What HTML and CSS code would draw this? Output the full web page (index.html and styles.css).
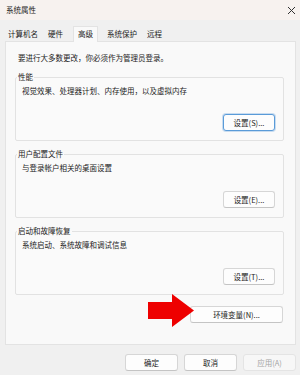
FILE: index.html
```html
<!DOCTYPE html>
<html lang="zh-CN">
<head>
<meta charset="utf-8">
<title>系统属性</title>
<link rel="stylesheet" href="styles.css">
</head>
<body>
<div class="window">
  <div class="titlebar">
    <span class="title">系统属性</span>
    <svg class="close" width="9" height="9" viewBox="0 0 9 9"><path d="M1 1 L8 8 M8 1 L1 8" stroke="#333" stroke-width="1" fill="none"/></svg>
  </div>
  <div class="tabs">
    <span class="tab">计算机名</span>
    <span class="tab">硬件</span>
    <span class="tab active">高级</span>
    <span class="tab">系统保护</span>
    <span class="tab">远程</span>
  </div>
  <div class="panel">
    <p class="intro">要进行大多数更改，你必须作为管理员登录。</p>
    <fieldset class="group">
      <legend>性能</legend>
      <div class="group-body">
        <p class="desc">视觉效果、处理器计划、内存使用，以及虚拟内存</p>
        <div class="btn-row"><button class="btn focused">设置(S)...</button></div>
      </div>
    </fieldset>
    <fieldset class="group">
      <legend>用户配置文件</legend>
      <div class="group-body">
        <p class="desc">与登录帐户相关的桌面设置</p>
        <div class="btn-row"><button class="btn">设置(E)...</button></div>
      </div>
    </fieldset>
    <fieldset class="group">
      <legend>启动和故障恢复</legend>
      <div class="group-body">
        <p class="desc">系统启动、系统故障和调试信息</p>
        <div class="btn-row"><button class="btn">设置(T)...</button></div>
      </div>
    </fieldset>
    <div class="env-row">
      <div class="env-wrap">
        <svg class="arrow" width="46" height="33" viewBox="0 0 46 33"><polygon points="0,8 24,8 24,0 46,16.5 24,33 24,25 0,25" fill="#ee0000"/></svg>
        <button class="btn env">环境变量(N)...</button>
      </div>
    </div>
  </div>
  <div class="footer">
    <button class="btn foot">确定</button>
    <button class="btn foot">取消</button>
    <button class="btn foot disabled">应用(A)</button>
  </div>
</div>
</body>
</html>
```
FILE: styles.css
```css
html, body {
  margin: 0;
  padding: 0;
}
body {
  width: 300px;
  height: 375px;
  overflow: hidden;
  background: #f0f0f0;
  font-family: "Noto Sans CJK SC", "Noto Sans", sans-serif;
  font-size: 7.5px;
  line-height: 10px;
  color: #1b1b1b;
}
.window {
  width: 300px;
  height: 375px;
  display: flex;
  flex-direction: column;
}
.titlebar {
  height: 20px;
  background: #f7f2ef;
  display: flex;
  align-items: center;
  justify-content: space-between;
  padding: 0 4px 0 6px;
  box-sizing: border-box;
}
.close {
  display: block;
}
.tabs {
  height: 21px;
  display: flex;
  align-items: flex-end;
  padding-left: 3px;
  background: #f0f0f0;
  position: relative;
  z-index: 1;
}
.tab {
  height: 15px;
  line-height: 15px;
  padding: 0 5px;
  box-sizing: border-box;
}
.tab.active {
  background: #f9f9f9;
  border: 1px solid #e3e3e3;
  border-bottom: none;
  height: 16px;
  margin: 0 4px 0 5px;
  padding: 0 4px;
  line-height: 14px;
  margin-bottom: -1px;
}
.panel {
  margin: 0 4px 0 5px;
  height: 304px;
  box-sizing: border-box;
  background: #f9f9f9;
  border: 1px solid #e3e3e3;
  padding: 11px 11px 0 9px;
}
.intro {
  margin: 0 0 0 3px;
}
.group {
  margin: 8px 0 0 0;
  padding: 0;
  border: 1px solid #e2e2e2;
  border-radius: 2px;
  min-width: 0;
  background: #fafafa;
}
.intro + .group {
  margin-top: 9px;
}
.group legend {
  padding: 0 1px;
  margin-left: 1px;
}
.group-body {
  padding: 4px 8px 9px 6px;
}
.desc {
  margin: 0;
}
.btn-row {
  display: flex;
  justify-content: flex-end;
  margin-top: 18px;
}
.btn {
  font-family: inherit;
  font-size: 7.5px;
  line-height: 10px;
  color: #1b1b1b;
  background: #fdfdfd;
  border: 1px solid #d6d6d6;
  border-bottom-color: #c4c4c4;
  border-radius: 3px;
  height: 17px;
  width: 52px;
  padding: 0;
  box-sizing: border-box;
}
.btn.focused {
  border: 1px solid #5a9bd8;
  box-shadow: 0 0 0 1px #c8dcf0;
}
.env-row {
  display: flex;
  justify-content: flex-end;
  margin-top: 11px;
  padding-right: 1px;
}
.env-wrap {
  position: relative;
}
.btn.env {
  width: 93px;
}
.arrow {
  position: absolute;
  left: -42px;
  top: -12px;
  z-index: 2;
}
.footer {
  display: flex;
  justify-content: flex-end;
  gap: 6px;
  padding: 9px 4px 0 0;
}
.btn.foot {
  width: 53px;
}
.btn.disabled {
  color: #a4a4a4;
  background: #f7f7f7;
  border-color: #e4e4e4;
}
```
